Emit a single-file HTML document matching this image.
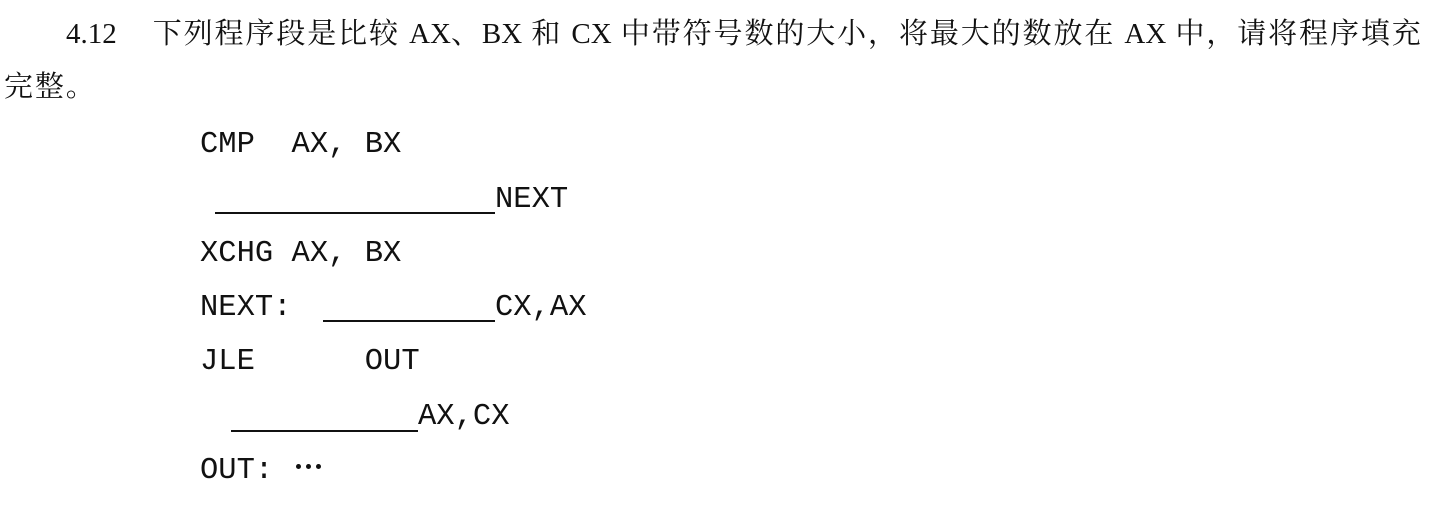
<!DOCTYPE html>
<html><head><meta charset="utf-8"><style>
body{margin:0;width:1436px;height:507px;background:#fff;position:relative;overflow:hidden;}
.t{position:absolute;white-space:pre;font-family:"Liberation Serif","Noto Serif CJK SC",serif;font-size:29px;color:#111;line-height:1;letter-spacing:1.9px;}
.l{letter-spacing:0;}
.m{position:absolute;white-space:pre;font-family:"Courier New","Liberation Mono",monospace;font-size:30.5px;color:#111;line-height:1;}
.u{position:absolute;height:2px;background:#111;}
.d{position:absolute;width:5px;height:5px;border-radius:50%;background:#111;top:464px;}
</style></head><body>
<div class="t" style="left:66px;top:20px;"><span class="l">4.12</span><span style="display:inline-block;width:36px"></span>下列程序段是比较 <span class="l">AX</span>、<span class="l">BX</span> 和 <span class="l">CX</span> 中带符号数的大小，将最大的数放在 <span class="l">AX</span> 中，请将程序填充</div>
<div class="t" style="left:4px;top:73px;">完整。</div>
<div class="m" style="left:200px;top:130px;">CMP  AX, BX</div>
<div class="m" style="left:495px;top:185px;">NEXT</div>
<div class="u" style="left:215px;top:212px;width:280px;"></div>
<div class="m" style="left:200px;top:239px;">XCHG AX, BX</div>
<div class="m" style="left:200px;top:293px;">NEXT:</div>
<div class="u" style="left:323px;top:320px;width:172px;"></div>
<div class="m" style="left:495px;top:293px;">CX,AX</div>
<div class="m" style="left:200px;top:347px;">JLE      OUT</div>
<div class="u" style="left:231px;top:430px;width:187px;"></div>
<div class="m" style="left:418px;top:402px;">AX,CX</div>
<div class="m" style="left:200px;top:456px;">OUT:</div>
<div class="d" style="left:296px;"></div>
<div class="d" style="left:306px;"></div>
<div class="d" style="left:316px;"></div>
</body></html>
